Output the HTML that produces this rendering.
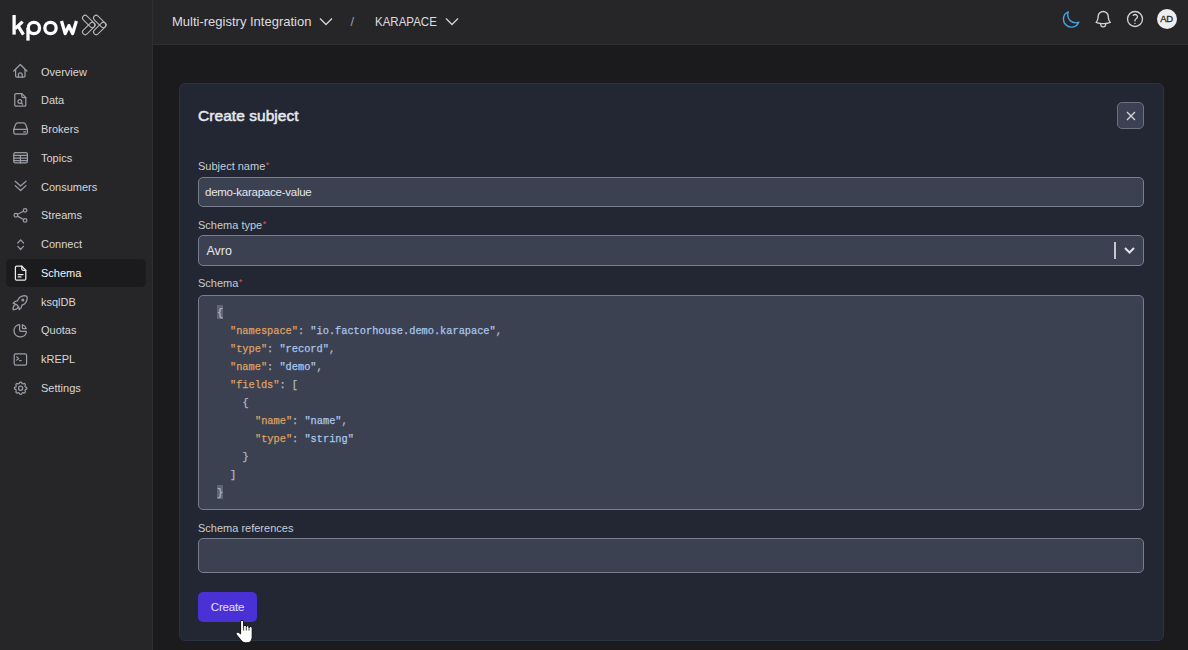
<!DOCTYPE html>
<html><head><meta charset="utf-8">
<style>
*{margin:0;padding:0;box-sizing:border-box}
html,body{width:1188px;height:650px;overflow:hidden;background:#1b1b1d;font-family:"Liberation Sans",sans-serif}
.abs{position:absolute}
#side{position:absolute;left:0;top:0;width:153px;height:650px;background:#262628;border-right:1px solid #2e2e31}
#head{position:absolute;left:153px;top:0;width:1035px;height:45px;background:#262628;border-bottom:1px solid #2e2e31}
.nav{position:absolute;left:6px;width:140px;height:28.75px;line-height:28.75px;font-size:11px;color:#d6d6da;border-radius:5px}
.nt{position:absolute;left:41px;height:28.75px;line-height:28.75px;font-size:11px;color:#d6d6da;white-space:nowrap}
.nav.act{background:#1b1b1d;color:#f2f2f4}
#card{position:absolute;left:178.5px;top:82.5px;width:985px;height:558px;background:#222733;border:1px solid #2c3241;border-radius:6px}
.lbl{position:absolute;left:198px;font-size:11px;line-height:13px;color:#c9ccd3;white-space:nowrap}
.lbl i{font-style:normal;color:#e5534b;font-size:9px;position:relative;top:-2px;margin-left:0.5px}
.inp{position:absolute;left:198px;width:946px;background:#3c4152;border:1.5px solid #7a7f8e;border-radius:5px}
.code{position:absolute;font-family:"Liberation Mono",monospace;font-size:10.3px;line-height:18px;height:18px;white-space:pre;color:#b4b9c4;-webkit-text-stroke:0.25px currentColor}
.k{color:#dea163}
.s{color:#a9c6ec}
</style></head><body>
<div id="side"></div>
<div id="head"></div>

<!-- logo -->
<svg class="abs" style="left:0;top:0" width="152" height="45" viewBox="0 0 152 45" fill="none" stroke="#ffffff" stroke-width="3.3">
  <path d="M14.1 15 V34.6"/>
  <path d="M22.6 21.6 L15.2 28.6"/>
  <path d="M18.2 26.2 L23.4 34.6"/>
  <path d="M28 28 V40.6"/>
  <circle cx="33.9" cy="28" r="5.65"/>
  <circle cx="50.5" cy="28" r="5.65"/>
  <path d="M61.5 21 L65.2 33.6 L68.9 25.6 L72.6 33.6 L76.4 21" stroke-linejoin="round"/>
</svg>
<svg class="abs" style="left:0;top:0" width="152" height="45" viewBox="0 0 152 45" fill="none" stroke="#b9b9bb" stroke-width="1.05">
  <rect x="81.05" y="18.85" width="15.4" height="5.3" rx="2.65" transform="rotate(45 88.75 21.5)"/>
  <rect x="81.05" y="25.85" width="15.4" height="5.3" rx="2.65" transform="rotate(-45 88.75 28.5)"/>
  <rect x="92.05" y="18.85" width="15.4" height="5.3" rx="2.65" transform="rotate(45 99.75 21.5)"/>
  <rect x="92.05" y="25.85" width="15.4" height="5.3" rx="2.65" transform="rotate(-45 99.75 28.5)"/>
</svg>

<!-- nav -->
<div class="nav act" style="top:258.6px"></div>
<div class="nt" style="top:57.6px">Overview</div>
<div class="nt" style="top:86.35px">Data</div>
<div class="nt" style="top:115.1px">Brokers</div>
<div class="nt" style="top:143.85px">Topics</div>
<div class="nt" style="top:172.6px">Consumers</div>
<div class="nt" style="top:201.35px">Streams</div>
<div class="nt" style="top:230.1px">Connect</div>
<div class="nt" style="top:258.85px;color:#f4f4f6">Schema</div>
<div class="nt" style="top:287.6px">ksqlDB</div>
<div class="nt" style="top:316.35px">Quotas</div>
<div class="nt" style="top:345.1px">kREPL</div>
<div class="nt" style="top:373.85px">Settings</div>
<svg class="abs" style="left:0;top:0" width="152" height="650" viewBox="0 0 152 650" fill="none" stroke="#9a9da6" stroke-width="1.25" stroke-linecap="round" stroke-linejoin="round">
  <!-- house -->
  <path d="M13.8 71 L20.3 64.5 L26.9 71"/>
  <path d="M15.6 69.3 V76 a1.2 1.2 0 0 0 1.2 1.2 H23.8 a1.2 1.2 0 0 0 1.2 -1.2 V69.3"/>
  <path d="M18.4 77.2 V74.7 a1.9 1.9 0 0 1 3.8 0 V77.2"/>
  <!-- data -->
  <path d="M21.8 93.6 H16 a1.2 1.2 0 0 0 -1.2 1.2 V105 a1.2 1.2 0 0 0 1.2 1.2 H24.6 a1.2 1.2 0 0 0 1.2 -1.2 V97.5 Z"/>
  <path d="M21.8 93.6 V96.3 a1.2 1.2 0 0 0 1.2 1.2 H25.8"/>
  <circle cx="19.9" cy="101.5" r="1.9"/>
  <path d="M21.3 102.9 L22.6 104.2"/>
  <!-- brokers -->
  <path d="M13.8 129.3 L15.6 124.4 a2.4 2.4 0 0 1 2.2 -1.5 H23.4 a2.4 2.4 0 0 1 2.2 1.5 L27.4 129.3"/>
  <path d="M13.8 129.3 H27.4 V132.6 a1.6 1.6 0 0 1 -1.6 1.6 H15.4 a1.6 1.6 0 0 1 -1.6 -1.6 Z"/>
  <path d="M23.6 131.8 H25.6"/>
  <!-- topics -->
  <rect x="13.8" y="152.6" width="13.6" height="10.2" rx="1.6"/>
  <path d="M13.8 155.3 H27.4 M13.8 158 H27.4 M13.8 160.5 H27.4 M20.4 155.3 V162.8"/>
  <!-- consumers -->
  <path d="M15.2 181.2 L20.6 186 L26 181.2 M15.2 185.6 L20.6 190.5 L26 185.6"/>
  <!-- streams -->
  <circle cx="15.9" cy="215.2" r="1.8"/>
  <circle cx="25.1" cy="210.3" r="1.8"/>
  <circle cx="25.1" cy="220.4" r="1.8"/>
  <path d="M17.5 214.3 L23.5 211.2 M17.5 216.1 L23.5 219.5"/>
  <!-- connect -->
  <path d="M17.8 243 L20.6 239.8 L23.5 243 M17.8 246.4 L20.6 249.5 L23.5 246.4"/>
  <!-- schema -->
  <g stroke="#ececf0">
  <path d="M21.8 266.2 H16.6 a1.2 1.2 0 0 0 -1.2 1.2 V279 a1.2 1.2 0 0 0 1.2 1.2 H24.6 a1.2 1.2 0 0 0 1.2 -1.2 V270.3 Z"/>
  <path d="M21.8 266.2 V269.1 a1.2 1.2 0 0 0 1.2 1.2 H25.8"/>
  <path d="M18.2 274.6 H23 M18.2 276.9 H21"/>
  </g>
  <!-- rocket -->
  <g transform="translate(9.6 292) scale(0.88)" stroke-width="1.45">
    <path d="M4 13a8 8 0 0 1 7 7a6 6 0 0 0 3 -5a9 9 0 0 0 6 -8a3 3 0 0 0 -3 -3a9 9 0 0 0 -8 6a6 6 0 0 0 -5 3"/>
    <path d="M7 14a6 6 0 0 0 -3 6a6 6 0 0 0 6 -3"/>
    <circle cx="15" cy="9" r="1"/>
  </g>
  <!-- quotas -->
  <g transform="translate(11.9 322.3) scale(0.7)" stroke-width="1.8">
    <path d="M10 3.2a9 9 0 1 0 10.8 10.8a1 1 0 0 0 -1 -1h-6.8a2 2 0 0 1 -2 -2v-7a.9 .9 0 0 0 -1 -.8"/>
    <path d="M15 3.5a9 9 0 0 1 5.5 5.5h-4.5a1 1 0 0 1 -1 -1v-4.5"/>
  </g>
  <!-- krepl -->
  <rect x="14.2" y="353.8" width="12.4" height="11.4" rx="1.6"/>
  <path d="M16.8 357 L18.7 358.5 L16.8 360 M19.6 360.6 H21.2"/>
  <!-- settings -->
  <g transform="translate(12.35 380) scale(0.69)" stroke-width="1.8">
    <path d="M10.325 4.317c.426 -1.756 2.924 -1.756 3.35 0a1.724 1.724 0 0 0 2.573 1.066c1.543 -.94 3.31 .826 2.37 2.37a1.724 1.724 0 0 0 1.065 2.572c1.756 .426 1.756 2.924 0 3.35a1.724 1.724 0 0 0 -1.066 2.573c.94 1.543 -.826 3.31 -2.37 2.37a1.724 1.724 0 0 0 -2.572 1.065c-.426 1.756 -2.924 1.756 -3.35 0a1.724 1.724 0 0 0 -2.573 -1.066c-1.543 .94 -3.31 -.826 -2.37 -2.37a1.724 1.724 0 0 0 -1.065 -2.572c-1.756 -.426 -1.756 -2.924 0 -3.35a1.724 1.724 0 0 0 1.066 -2.573c-.94 -1.543 .826 -3.31 2.37 -2.37c1 .608 2.296 .07 2.572 -1.065z"/>
    <circle cx="12" cy="12" r="3"/>
  </g>
</svg>

<!-- header -->
<div class="abs" style="left:172px;top:14.2px;font-size:13px;line-height:16px;color:#dcdce0">Multi-registry Integration</div>
<svg class="abs" style="left:319px;top:17px" width="14" height="9" viewBox="0 0 14 9" fill="none" stroke="#d0d0d4" stroke-width="1.4"><path d="M1 1.5 L7 7.5 L13 1.5"/></svg>
<div class="abs" style="left:350.5px;top:14.2px;font-size:13px;line-height:16px;color:#9aa0ab">/</div>
<div class="abs" style="left:375px;top:14.2px;font-size:13px;line-height:16px;color:#dcdce0;transform:scaleX(0.885);transform-origin:0 0">KARAPACE</div>
<svg class="abs" style="left:445px;top:17px" width="14" height="9" viewBox="0 0 14 9" fill="none" stroke="#d0d0d4" stroke-width="1.4"><path d="M1 1.5 L7 7.5 L13 1.5"/></svg>

<svg class="abs" style="left:1060.6px;top:9.7px" width="19.6" height="19.6" viewBox="0 0 24 24" fill="none" stroke="#4ba3e3" stroke-width="1.7" stroke-linecap="round" stroke-linejoin="round"><path d="M21.752 15.002A9.718 9.718 0 0118 15.75c-5.385 0-9.75-4.365-9.75-9.75 0-1.33.266-2.597.748-3.752A9.753 9.753 0 003 11.25C3 16.635 7.365 21 12.75 21a9.753 9.753 0 009.002-5.998z"/></svg>
<svg class="abs" style="left:1092.5px;top:9.1px" width="20.4" height="20.4" viewBox="0 0 24 24" fill="none" stroke="#d2d2d6" stroke-width="1.6" stroke-linecap="round" stroke-linejoin="round"><path d="M14.857 17.082a23.848 23.848 0 005.454-1.31A8.967 8.967 0 0118 9.75v-.7V9A6 6 0 006 9v.75a8.967 8.967 0 01-2.312 6.022c1.733.64 3.56 1.085 5.455 1.31m5.714 0a24.255 24.255 0 01-5.714 0m5.714 0a3 3 0 11-5.714 0"/></svg>
<svg class="abs" style="left:1124.9px;top:9.2px" width="20" height="20" viewBox="0 0 24 24" fill="none" stroke="#d2d2d6" stroke-width="1.6" stroke-linecap="round" stroke-linejoin="round"><path d="M9.879 7.519c1.171-1.025 3.071-1.025 4.242 0 1.172 1.025 1.172 2.687 0 3.712-.203.179-.43.326-.67.442-.745.361-1.45.999-1.45 1.827v.75M21 12a9 9 0 11-18 0 9 9 0 0118 0zm-9 5.25h.008v.008H12v-.008z"/></svg>
<div class="abs" style="left:1156.5px;top:9px;width:20px;height:20px;border-radius:50%;background:#ededf0"></div><div class="abs" style="left:1156.5px;top:12px;width:20px;height:14px;color:#262628;font-size:9.5px;line-height:14px;text-align:center;letter-spacing:-0.4px;-webkit-text-stroke:0.3px #262628">AD</div>

<!-- card -->
<div id="card"></div>
<div class="abs" style="left:198px;top:105.6px;font-size:15.5px;line-height:20px;color:#e9e9ee;-webkit-text-stroke:0.5px #e9e9ee;letter-spacing:0.05px">Create subject</div>
<div class="abs" style="left:1117px;top:102px;width:27px;height:27px;background:#3b4052;border:1.5px solid #6c7282;border-radius:5px"></div>
<svg class="abs" style="left:1126px;top:111px" width="10" height="10" viewBox="0 0 10 10" fill="none" stroke="#d8d8dc" stroke-width="1.3"><path d="M1 1 L9 9 M9 1 L1 9"/></svg>

<div class="lbl" style="top:159.6px">Subject name<i>*</i></div>
<div class="inp" style="top:176.5px;height:30px"></div>
<div class="abs" style="left:205px;top:184px;font-size:11.5px;line-height:16px;color:#e6e6ea;letter-spacing:-0.25px">demo-karapace-value</div>

<div class="lbl" style="top:219px">Schema type<i>*</i></div>
<div class="inp" style="top:234.8px;height:31px"></div>
<div class="abs" style="left:206.5px;top:243px;font-size:12.5px;line-height:16px;color:#e6e6ea">Avro</div>
<div class="abs" style="left:1114px;top:242px;width:1.5px;height:17px;background:#c6c7cc"></div>
<svg class="abs" style="left:1123px;top:246px" width="13" height="9" viewBox="0 0 13 9" fill="none" stroke="#e2e2e6" stroke-width="2"><path d="M2 2 L6.5 6.5 L11 2"/></svg>

<div class="lbl" style="top:277.3px">Schema<i>*</i></div>
<div class="inp" style="top:294.5px;height:215px"></div>
<div class="abs" style="left:216.8px;top:304.7px;width:6.5px;height:14.8px;background:#5d657a"></div>
<div class="code" style="left:217px;top:303.75px">{</div>
<div class="code" style="left:230px;top:321.75px"><span class="k">"namespace"</span>: <span class="s">"io.factorhouse.demo.karapace"</span>,</div>
<div class="code" style="left:230px;top:339.75px"><span class="k">"type"</span>: <span class="s">"record"</span>,</div>
<div class="code" style="left:230px;top:357.75px"><span class="k">"name"</span>: <span class="s">"demo"</span>,</div>
<div class="code" style="left:230px;top:375.75px"><span class="k">"fields"</span>: [</div>
<div class="code" style="left:242.5px;top:393.75px">{</div>
<div class="code" style="left:255px;top:411.75px"><span class="k">"name"</span>: <span class="s">"name"</span>,</div>
<div class="code" style="left:255px;top:429.75px"><span class="k">"type"</span>: <span class="s">"string"</span></div>
<div class="code" style="left:242.5px;top:447.75px">}</div>
<div class="code" style="left:230px;top:465.75px">]</div>
<div class="abs" style="left:216.8px;top:484.7px;width:6.5px;height:14.8px;background:#5d657a"></div>
<div class="code" style="left:217px;top:483.75px">}</div>

<div class="lbl" style="top:521.5px">Schema references</div>
<div class="inp" style="top:537.5px;height:35.5px"></div>

<div class="abs" style="left:198px;top:592px;width:59px;height:30px;background:#4a31d6;border-radius:5px;color:#e6e2fa;font-size:11.5px;line-height:30px;text-align:center;letter-spacing:-0.2px">Create</div>

<!-- cursor -->
<svg class="abs" style="left:0;top:0" width="1188" height="650" viewBox="0 0 1188 650">
<path d="M240.6 632 V621.8 a1.5 1.5 0 0 1 3 0 V626.6 a1.35 1.35 0 0 1 2.7 0 V627.1 a1.35 1.35 0 0 1 2.7 0 V628 a1.6 1.6 0 0 1 3.2 0 V636 C252.3 640 250.5 642.8 247 642.8 H245.5 C243.3 642.8 242 641.5 240.5 639.5 L236.5 634.8 C235.7 633.8 236.1 632.6 237.1 632.3 C238.2 632 239.3 632.6 240.6 634 Z" fill="#fff" stroke="#0d0d0d" stroke-width="1"/>
<path d="M243.6 626.8 V630.6 M246.3 627.3 V630.6 M249 628.2 V630.6" stroke="#0d0d0d" stroke-width="0.8" fill="none"/>
</svg>
</body></html>
